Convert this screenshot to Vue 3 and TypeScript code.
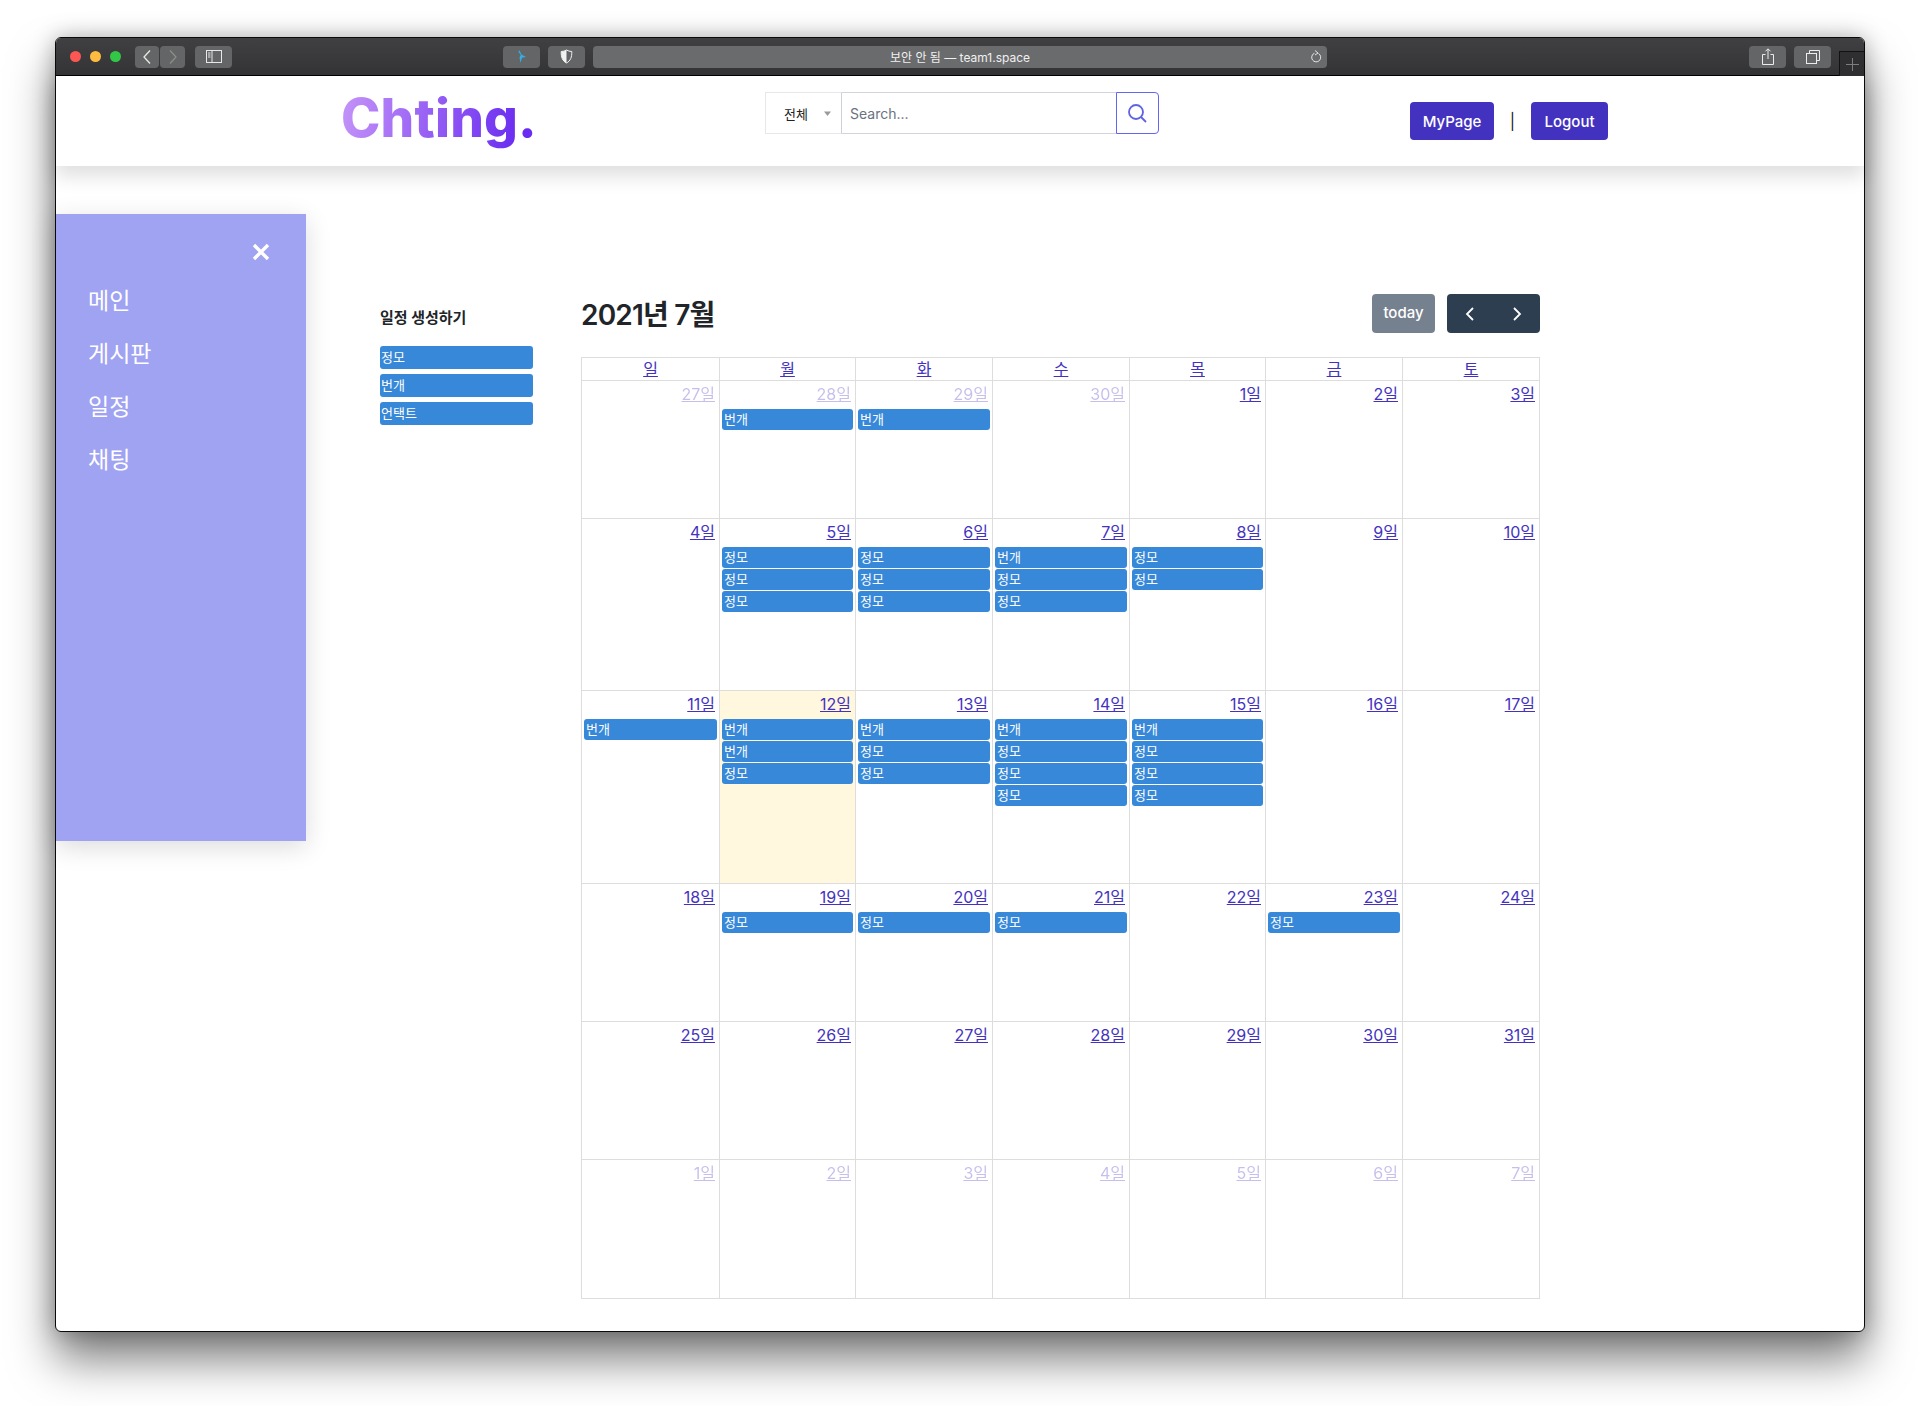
<script setup lang="ts">
import { ref } from "vue";

interface Day {
  label: string;
  other?: boolean;
  today?: boolean;
  events: string[];
}

const J = "정모";
const B = "번개";

const menu = ["메인", "게시판", "일정", "채팅"];
const templates = ["정모", "번개", "언택트"];
const dow = ["일", "월", "화", "수", "목", "금", "토"];
const keyword = ref("");

function d(n: number, events: string[] = [], other = false, today = false): Day {
  return { label: n + "일", events, other, today };
}

const weeks = ref<{ cls: string; days: Day[] }[]>([
  {
    cls: "h-138",
    days: [d(27, [], true), d(28, [B], true), d(29, [B], true), d(30, [], true), d(1), d(2), d(3)],
  },
  {
    cls: "h-172",
    days: [d(4), d(5, [J, J, J]), d(6, [J, J, J]), d(7, [B, J, J]), d(8, [J, J]), d(9), d(10)],
  },
  {
    cls: "h-193",
    days: [
      d(11, [B]),
      d(12, [B, B, J], false, true),
      d(13, [B, J, J]),
      d(14, [B, J, J, J]),
      d(15, [B, J, J, J]),
      d(16),
      d(17),
    ],
  },
  {
    cls: "h-138",
    days: [d(18), d(19, [J]), d(20, [J]), d(21, [J]), d(22), d(23, [J]), d(24)],
  },
  { cls: "h-138", days: [d(25), d(26), d(27), d(28), d(29), d(30), d(31)] },
  {
    cls: "h-139",
    days: [1, 2, 3, 4, 5, 6, 7].map((n) => d(n, [], true)),
  },
]);
</script>

<template>
  <div class="page">
    <div class="window">
      <div class="titlebar">
        <span class="light red"></span>
        <span class="light yellow"></span>
        <span class="light green"></span>

        <div class="tb-btn back">
          <svg width="10" height="16" viewBox="0 0 10 16"><path d="M8 1.500 2 8l6 6.500" fill="none" stroke="#e8e8e8" stroke-width="1.300" /></svg>
        </div>
        <div class="tb-btn forward">
          <svg width="10" height="16" viewBox="0 0 10 16"><path d="M2 1.500 8 8l-6 6.500" fill="none" stroke="#8c8c8c" stroke-width="1.300" /></svg>
        </div>
        <div class="tb-btn sidebar-btn">
          <svg width="16" height="13" viewBox="0 0 16 13">
            <rect x="0.500" y="0.500" width="15" height="12" fill="none" stroke="#e8e8e8" />
            <path d="M6 .5v12" stroke="#e8e8e8" />
            <path d="M2 3h2.500M2 5h2.500M2 7h2.500" stroke="#e8e8e8" />
          </svg>
        </div>

        <div class="tb-btn site-btn">
          <svg width="12" height="15" viewBox="0 0 12 15"><path d="M3 1c1 1.500 2 3 2.500 4.500L10 8 6 8.800 4.500 14 3.500 8.500 4.800 6 2.500 3z" fill="#35aee2" /></svg>
        </div>
        <div class="tb-btn shield-btn">
          <svg width="13" height="15" viewBox="0 0 13 15">
            <path d="M6.500 1C5 2 3 2.500 1.200 2.500 1 8 2.500 12 6.500 14c4-2 5.500-6 5.300-11.500C10 2.500 8 2 6.500 1z" fill="none" stroke="#f2f2f2" />
            <path d="M6.500 1C5 2 3 2.500 1.200 2.500 1 8 2.500 12 6.500 14z" fill="#f2f2f2" />
          </svg>
        </div>

        <div class="address">
          <span>보안 안 됨 — team1.space</span>
          <svg class="reload" width="12" height="14" viewBox="0 0 12 14">
            <path d="M8.500 3.500a4.500 4.500 0 1 1-4-.3" fill="none" stroke="#e6e6e6" />
            <path d="M5 .5 8 3 5 5" fill="none" stroke="#e6e6e6" />
          </svg>
        </div>

        <div class="tb-btn share-btn">
          <svg width="14" height="17" viewBox="0 0 14 17">
            <path d="M4.500 6.500H1.500v10h11v-10H9.500M7 11V1M4.500 3.300 7 .8l2.500 2.500" fill="none" stroke="#ececec" />
          </svg>
        </div>
        <div class="tb-btn tabs-btn">
          <svg width="14" height="14" viewBox="0 0 14 14">
            <rect x="0.500" y="3.500" width="10" height="10" fill="none" stroke="#ececec" />
            <path d="M3.500 3.500v-3h10v10h-3" fill="none" stroke="#ececec" />
          </svg>
        </div>
        <div class="new-tab">
          <svg width="13" height="13" viewBox="0 0 13 13"><path d="M6.500 0v13M0 6.500h13" stroke="#7d7d7d" /></svg>
        </div>
      </div>

      <header class="topbar">
        <div class="logo-wrap"><span class="logo">Chting.</span></div>
        <form class="search" @submit.prevent>
          <div class="category">
            <span>전체</span>
            <svg width="7" height="5" viewBox="0 0 7 5"><path d="M0 .5h7L3.500 5z" fill="#9a9a9a" /></svg>
          </div>
          <input v-model="keyword" class="search-input" placeholder="Search..." />
          <button class="search-btn" type="submit">
            <svg width="21" height="21" viewBox="0 0 21 21">
              <circle cx="9" cy="9" r="7" fill="none" stroke="#5f62e4" stroke-width="1.800" />
              <path d="m14 14 5 5" stroke="#5f62e4" stroke-width="1.800" />
            </svg>
          </button>
        </form>
        <div class="actions">
          <button class="primary mypage">MyPage</button>
          <span class="sep">|</span>
          <button class="primary logout">Logout</button>
        </div>
      </header>

      <aside class="drawer">
        <div class="close">
          <svg width="18" height="18" viewBox="0 0 18 18"><path d="m2 2 14 14m0-14L2 16" stroke="#fff" stroke-width="3.400" /></svg>
        </div>
        <ul>
          <li v-for="item in menu" :key="item">{{ item }}</li>
        </ul>
      </aside>

      <main class="content">
        <section class="panel">
          <h4>일정 생성하기</h4>
          <div v-for="t in templates" :key="t" class="tpl">{{ t }}</div>
        </section>

        <section class="calendar">
          <div class="cal-toolbar">
            <h2>2021년 7월</h2>
            <div class="cal-actions">
              <button class="today-btn">today</button>
              <div class="nav-group">
                <button>
                  <svg width="10" height="16" viewBox="0 0 10 16"><path d="M8 2 2 8l6 6" fill="none" stroke="#fff" stroke-width="1.800" /></svg>
                </button>
                <button>
                  <svg width="10" height="16" viewBox="0 0 10 16"><path d="m2 2 6 6-6 6" fill="none" stroke="#fff" stroke-width="1.800" /></svg>
                </button>
              </div>
            </div>
          </div>

          <div class="grid">
            <div class="row head">
              <div v-for="name in dow" :key="name" class="cell head-cell"><a>{{ name }}</a></div>
            </div>
            <div v-for="(week, w) in weeks" :key="w" class="row" :class="week.cls">
              <div
                v-for="(day, i) in week.days"
                :key="i"
                class="cell"
                :class="{ today: day.today }"
              >
                <div class="date" :class="{ other: day.other }"><a>{{ day.label }}</a></div>
                <div v-for="(ev, k) in day.events" :key="k" class="event">{{ ev }}</div>
              </div>
            </div>
          </div>
        </section>
      </main>
    </div>
  </div>
</template>

<style scoped>
.page {
  box-sizing: border-box;
  height: 1406px;
  padding: 37px 55px 0;
  font-family: Inter, "Noto Sans CJK KR", sans-serif;
  color: #212529;
}

.window {
  position: relative;
  box-sizing: border-box;
  width: 1810px;
  height: 1295px;
  background: #fff;
  border: 1px solid #0a0a0a;
  border-radius: 6px;
  box-shadow: 0 28px 45px rgba(0, 0, 0, 0.5), 0 0 22px rgba(0, 0, 0, 0.28);
}

.titlebar {
  display: flex;
  align-items: center;
  box-sizing: border-box;
  height: 38px;
  padding-left: 14px;
  background: linear-gradient(#404042, #343437);
  border-bottom: 1px solid #000;
  border-radius: 5px 5px 0 0;
}

.light {
  width: 11px;
  height: 11px;
  margin-right: 9px;
  border-radius: 50%;
}
.red { background: #fc5753; }
.yellow { background: #fdbc40; }
.green { background: #33c748; }

.tb-btn {
  display: flex;
  align-items: center;
  justify-content: center;
  height: 22px;
  background: #646566;
  border-radius: 4px;
}
.back { width: 24px; margin-left: 5px; }
.forward { width: 25px; margin-left: 1px; }
.sidebar-btn { width: 37px; margin-left: 10px; }
.site-btn { width: 37px; margin-left: 271px; }
.shield-btn { width: 37px; margin-left: 8px; }
.share-btn { width: 37px; margin-left: 422px; }
.tabs-btn { width: 37px; margin-left: 8px; }

.address {
  position: relative;
  display: flex;
  align-items: center;
  justify-content: center;
  width: 734px;
  height: 22px;
  margin-left: 8px;
  background: #6a6b6c;
  border-radius: 4px;
  color: #f0f0f0;
  font-size: 12px;
}
.reload {
  position: absolute;
  right: 5px;
  top: 4px;
}

.new-tab {
  display: flex;
  align-items: center;
  justify-content: center;
  box-sizing: border-box;
  align-self: flex-end;
  width: 25px;
  height: 25px;
  margin-left: 8px;
  margin-bottom: -1px;
  background: #2f2f31;
  border-top: 1px solid #111;
  border-left: 1px solid #111;
}

.topbar {
  display: flex;
  align-items: center;
  height: 90px;
  padding-left: 285px;
  background: #fff;
  box-shadow: 0 10px 18px rgba(0, 0, 0, 0.13);
}
.logo-wrap {
  width: 424px;
  margin-bottom: 6px;
}
.logo {
  font-family: Inter, sans-serif;
  font-size: 53px;
  font-weight: 800;
  letter-spacing: 0.2px;
  line-height: 64px;
  background: linear-gradient(100deg, #c08ff8 5%, #6a2cf0 90%);
  -webkit-background-clip: text;
  background-clip: text;
  color: transparent;
}

.search {
  display: flex;
  height: 42px;
  margin-bottom: 16px;
}
.category {
  display: flex;
  align-items: center;
  box-sizing: border-box;
  width: 77px;
  padding-left: 18px;
  gap: 16px;
  font-size: 13px;
  color: #222;
  border: 1px solid #e6e7ea;
  border-right: 1px solid #cdd0d8;
}
.search-input {
  box-sizing: border-box;
  width: 274px;
  height: 42px;
  padding: 0 8px;
  border: 1px solid #d2d4dc;
  border-left: 0;
  border-right: 0;
  outline: none;
  font: 14px Inter, sans-serif;
}
.search-input::placeholder {
  color: #6b7280;
}
.search-btn {
  display: flex;
  align-items: center;
  justify-content: center;
  box-sizing: border-box;
  width: 43px;
  height: 42px;
  padding: 0;
  background: #fff;
  border: 1px solid #6366f1;
  border-radius: 0 4px 4px 0;
}

.actions {
  display: flex;
  align-items: center;
  margin-left: 251px;
}
.primary {
  height: 38px;
  padding: 0;
  background: #4332c0;
  color: #fff;
  border: 0;
  border-radius: 4px;
  font: 500 15px Inter, sans-serif;
}
.mypage { width: 84px; }
.logout { width: 77px; }
.sep {
  width: 37px;
  text-align: center;
  font-size: 16px;
  color: #222;
}

.drawer {
  position: absolute;
  left: 0;
  top: 176px;
  box-sizing: border-box;
  width: 250px;
  height: 627px;
  background: #9fa3f2;
  box-shadow: 0 6px 24px rgba(0, 0, 0, 0.14);
  color: #fff;
}
.close {
  position: absolute;
  right: 36px;
  top: 29px;
  height: 18px;
}
.drawer ul {
  margin: 0;
  padding: 61px 0 0 32px;
  list-style: none;
}
.drawer li {
  height: 53px;
  line-height: 53px;
  font-size: 23px;
}

.content {
  display: flex;
  align-items: flex-start;
  padding: 128px 0 0 324px;
}

.panel {
  width: 153px;
  margin-right: 48px;
}
.panel h4 {
  margin: 13px 0 17px;
  font-size: 15px;
  font-weight: 700;
  line-height: 22px;
  color: #212529;
}
.tpl {
  height: 23px;
  margin-bottom: 5px;
  padding-left: 1px;
  background: #3788d8;
  border-radius: 3px;
  color: #fff;
  font-size: 13px;
  line-height: 22px;
}

.calendar {
  width: 959px;
}
.cal-toolbar {
  display: flex;
  align-items: center;
  justify-content: space-between;
  height: 39px;
  margin-bottom: 24px;
}
.cal-toolbar h2 {
  margin: 0 0 2px;
  font-size: 28px;
  font-weight: 600;
  letter-spacing: -0.8px;
  color: #212529;
}
.cal-actions {
  display: flex;
  gap: 12px;
}
.today-btn {
  width: 63px;
  height: 39px;
  padding: 0 0 2px;
  background: #76818f;
  border: 0;
  border-radius: 4px;
  color: #fff;
  font: 500 15px Inter, sans-serif;
}
.nav-group {
  display: flex;
  width: 93px;
  height: 39px;
  background: #2c3e50;
  border-radius: 4px;
}
.nav-group button {
  display: flex;
  align-items: center;
  justify-content: center;
  flex: 1;
  padding: 0;
  background: none;
  border: 0;
}

.grid {
  border-right: 1px solid #ddd;
  border-bottom: 1px solid #ddd;
}
.row {
  display: grid;
  grid-template-columns: 138px 136px 137px 137px 136px 137px 137px;
}
.head { height: 23px; }
.h-138 { height: 138px; }
.h-139 { height: 139px; }
.h-172 { height: 172px; }
.h-193 { height: 193px; }

.cell {
  box-sizing: border-box;
  padding: 0 2px;
  border-left: 1px solid #ddd;
  border-top: 1px solid #ddd;
}
.cell a {
  color: #4332c0;
  text-decoration: underline;
}
.head-cell {
  text-align: center;
  font-size: 16px;
  line-height: 22px;
}
.today {
  background: #fff8de;
}
.date {
  height: 28px;
  padding-right: 2px;
  text-align: right;
  font-size: 16px;
  line-height: 26px;
}
.other {
  opacity: 0.3;
}
.event {
  height: 21px;
  margin-bottom: 1px;
  padding-left: 2px;
  background: #3788d8;
  border-radius: 3px;
  color: #fff;
  font-size: 13px;
  line-height: 20px;
}
</style>

<style>
body {
  background: #fff;
}
</style>
